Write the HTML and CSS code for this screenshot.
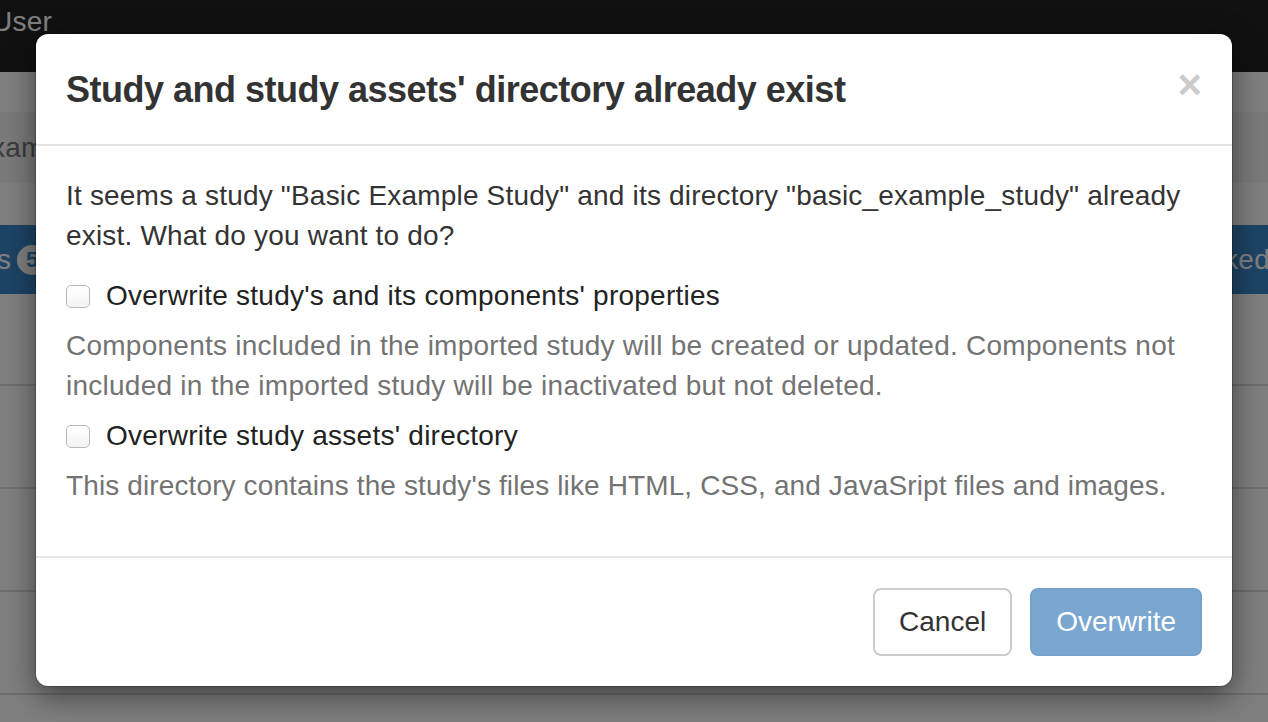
FILE: index.html
```html
<!DOCTYPE html>
<html lang="en">
<head>
    <meta charset="UTF-8">
    <meta name="viewport" content="width=device-width, initial-scale=1.0">
    <title>Import Study</title>
    <link rel="stylesheet" href="styles.css">
</head>
<body>
    <div class="page">
        <nav class="navbar"><span class="navbar-user">User</span></nav>
        <div class="crumb-space"></div>
        <div class="crumb">Example Study</div>
        <div class="crumb-after"></div>
        <div class="toolbar">
            <span class="toolbar-left">Components <span class="badge">5</span></span>
            <span class="toolbar-right">Locked</span>
        </div>
        <div class="row row-first"></div>
        <div class="row"></div>
        <div class="row"></div>
        <div class="row"></div>
    </div>

    <div class="backdrop"></div>

    <div class="modal">
        <div class="modal-header">
            <h4 class="modal-title">Study and study assets' directory already exist</h4>
            <button class="close" type="button">&times;</button>
        </div>
        <div class="modal-body">
            <p class="intro">It seems a study "Basic Example Study" and its directory "basic_example_study" already exist. What do you want to do?</p>
            <label class="checkbox">
                <input type="checkbox">
                <span>Overwrite study's and its components' properties</span>
            </label>
            <p class="help-block">Components included in the imported study will be created or updated. Components not included in the imported study will be inactivated but not deleted.</p>
            <label class="checkbox">
                <input type="checkbox">
                <span>Overwrite study assets' directory</span>
            </label>
            <p class="help-block last">This directory contains the study's files like HTML, CSS, and JavaSript files and images.</p>
        </div>
        <div class="modal-footer">
            <button class="btn btn-default" type="button">Cancel</button>
            <button class="btn btn-primary" type="button" disabled>Overwrite</button>
        </div>
    </div>
</body>
</html>
```

FILE: styles.css
```css
html, body {
    margin: 0;
    height: 722px;
    overflow: hidden;
}
body {
    font-family: "Liberation Sans", Arial, sans-serif;
    font-size: 28px;
    line-height: 40px;
    letter-spacing: 0.25px;
    color: #333;
    background: #fff;
    position: relative;
}

/* page behind the dialog */
.navbar {
    height: 72px;
    background: #222;
    color: #fff;
}
.navbar-user {
    display: block;
    line-height: 44px;
    margin-left: -8px;
}
.crumb-space { height: 40px; }
.crumb {
    height: 71px;
    line-height: 71px;
    background: #f5f5f5;
    color: #777;
    margin-left: -28px;
    white-space: nowrap;
}
.crumb-after { height: 42px; }
.toolbar {
    height: 69px;
    background: #3a88cc;
    color: #fff;
    display: flex;
    justify-content: space-between;
    align-items: center;
    white-space: nowrap;
}
.toolbar-left {
    margin-left: -150px;
    display: flex;
    align-items: center;
    gap: 6px;
}
.toolbar-right { margin-right: -2px; }
.badge {
    display: inline-block;
    width: 30px;
    height: 30px;
    line-height: 30px;
    border-radius: 15px;
    background: #fff;
    color: #3a88cc;
    font-size: 22px;
    font-weight: bold;
    text-align: center;
}
.row {
    height: 101px;
    border-bottom: 2px solid #ddd;
}
.row-first { height: 90px; }

.backdrop {
    position: absolute;
    inset: 0;
    background: rgba(0, 0, 0, 0.5);
}

/* dialog */
.modal {
    position: absolute;
    left: 36px;
    top: 34px;
    width: 1196px;
    background: #fff;
    border-radius: 12px;
    box-shadow: 0 0 0 1px rgba(0, 0, 0, 0.2), 0 10px 30px rgba(0, 0, 0, 0.5);
}
.modal-header {
    display: flex;
    justify-content: space-between;
    align-items: flex-start;
    padding: 30px 30px 29px;
    border-bottom: 2px solid #e5e5e5;
}
.modal-title {
    margin: 0;
    font-size: 36px;
    line-height: 51px;
    font-weight: bold;
    letter-spacing: -0.5px;
    color: #333;
}
.close {
    border: none;
    background: none;
    padding: 0;
    font-family: inherit;
    font-size: 42px;
    line-height: 1;
    font-weight: bold;
    color: #000;
    opacity: 0.2;
    text-shadow: 0 1px 0 #fff;
    cursor: pointer;
}
.modal-body {
    padding: 30px;
}
.intro {
    margin: 0 0 20px;
    letter-spacing: 0.19px;
}
.checkbox {
    display: flex;
    align-items: center;
    gap: 16px;
    margin: 0 0 10px;
    color: #222;
}
.checkbox input {
    appearance: none;
    width: 24px;
    height: 23px;
    margin: 0;
    border: 1px solid #b8b8b8;
    border-radius: 5px;
    background: linear-gradient(#fff, #f3f3f3);
}
.help-block {
    margin: 0 0 10px;
    color: #737373;
}
.help-block.last {
    margin-bottom: 20px;
    letter-spacing: 0.12px;
}
.modal-footer {
    display: flex;
    justify-content: flex-end;
    gap: 18px;
    padding: 30px;
    border-top: 2px solid #e5e5e5;
}
.btn {
    font-family: inherit;
    font-size: 28px;
    line-height: 40px;
    letter-spacing: 0;
    padding: 12px 24px;
    border: 2px solid transparent;
    border-radius: 8px;
    cursor: pointer;
}
.btn-default {
    background: #fff;
    border-color: #ccc;
    color: #333;
}
.btn-primary {
    background: #7aa7d0;
    border-color: #75a2cb;
    color: #fff;
}
```
